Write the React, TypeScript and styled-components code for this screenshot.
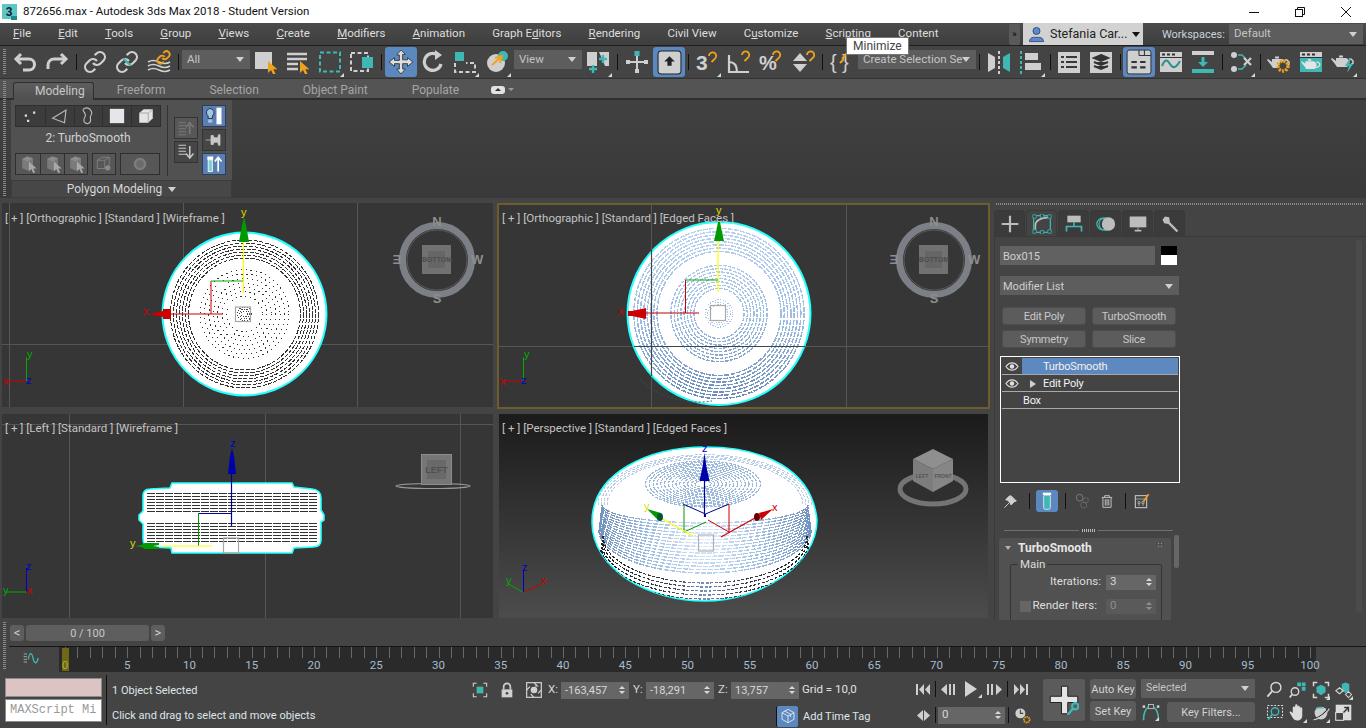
import React from 'react';
import styled, { createGlobalStyle } from 'styled-components';

const UI_FONT = 'Roboto, "Open Sans", "Liberation Sans", sans-serif';
const GRAY = '#cfcfcf';
const TEAL = '#3fb7b3';
const ORANGE = '#efa31d';

const GlobalStyle = createGlobalStyle`
  html, body {
    margin: 0;
    padding: 0;
    background: #444;
    overflow: hidden;
  }
  * {
    box-sizing: border-box;
  }
`;

const Shell = styled.div`
  position: relative;
  display: flex;
  flex-direction: column;
  width: 1366px;
  height: 728px;
  overflow: hidden;
  background: #444;
  color: #d6d6d6;
  font: 12px/1 ${UI_FONT};
`;

/* title bar */
const TitleBar = styled.div`
  display: flex;
  flex: 0 0 23px;
  align-items: center;
  padding-left: 2px;
  background: #fff;
  color: #111;
  font-size: 11.5px;
`;
const TitleText = styled.span`
  margin-left: 5px;
`;
const WindowButtons = styled.div`
  display: flex;
  margin-left: auto;
  margin-right: -3px;
`;
const WindowButton = styled.span`
  display: flex;
  align-items: center;
  justify-content: center;
  width: 46px;
  height: 20px;
`;

/* menu bar */
const MenuBar = styled.div`
  display: flex;
  flex: 0 0 23px;
  align-items: stretch;
  padding-left: 13px;
  background: linear-gradient(#4b4b4b, #3e3e3e);
  border-bottom: 1px solid #1f1f1f;
`;
const MenuItems = styled.nav`
  display: flex;
  flex: 1;
  align-items: center;
  gap: 27.2px;
  color: #dedede;
  font-size: 11.5px;
`;
const Mnemonic = styled.span`
  text-decoration: underline;
`;
const Overflow = styled.span`
  display: flex;
  align-items: center;
  justify-content: center;
  width: 11px;
  margin: 1px 3px 0 0;
  background: #5a5a5a;
  border-radius: 2px;
  color: #111;
  font-size: 9px;
  font-weight: 700;
`;
const UserBlock = styled.div`
  display: flex;
  align-items: center;
  gap: 5px;
  width: 120px;
  padding-left: 5px;
  background: #d2d2d2;
  color: #222;
  font-size: 12.5px;
`;
const WorkspaceLabel = styled.span`
  display: flex;
  align-items: center;
  width: 86px;
  padding-left: 19px;
  color: #c9d2dc;
  font-size: 11px;
`;
const SelectBox = styled.div<{ $w: number; $h?: number }>`
  display: flex;
  align-items: center;
  justify-content: space-between;
  flex: 0 0 ${(p) => p.$w}px;
  width: ${(p) => p.$w}px;
  height: ${(p) => p.$h ?? 19}px;
  padding: 0 6px 0 5px;
  background: #5d5d5d;
  color: #c4c4c4;
  font-size: 11.5px;
  white-space: nowrap;
`;
const Caret = styled.span<{ $dark?: boolean }>`
  width: 0;
  height: 0;
  border-left: 4px solid transparent;
  border-right: 4px solid transparent;
  border-top: 5px solid ${(p) => (p.$dark ? '#111' : '#d0d0d0')};
`;
const WorkspaceSelect = styled(SelectBox)`
  height: auto;
  margin: 1px 3px 1px 0;
`;

/* main toolbar */
const MainToolbar = styled.div`
  display: flex;
  flex: 0 0 33px;
  align-items: center;
  padding-left: 9px;
  background: #444;
  border-bottom: 1px solid #333;
`;
const Grip = styled.span<{ $h: number; $top: number }>`
  position: absolute;
  top: ${(p) => p.$top}px;
  left: 3px;
  width: 3px;
  height: ${(p) => p.$h}px;
  background: repeating-linear-gradient(#8a8a8a 0 1px, transparent 1px 2px);
`;
const ToolBtn = styled.span<{ $active?: boolean; $flyout?: boolean }>`
  position: relative;
  display: flex;
  flex: 0 0 32px;
  align-items: center;
  justify-content: center;
  height: 30px;
  border-radius: 3px;
  background: ${(p) => (p.$active ? '#5b88bf' : 'transparent')};
  box-shadow: ${(p) => (p.$active ? '1px 0 0 #444, -1px 0 0 #444' : 'none')};
  &::after {
    content: '';
    display: ${(p) => (p.$flyout ? 'block' : 'none')};
    position: absolute;
    right: 2px;
    bottom: 0;
    border-left: 4px solid transparent;
    border-bottom: 4px solid #d8d8d8;
  }
`;
const ToolSep = styled.span<{ $w?: number }>`
  flex: 0 0 ${(p) => p.$w ?? 6}px;
  height: 16px;
  background: linear-gradient(#111, #111) center / 1px 100% no-repeat;
`;
const ToolSelect = styled(SelectBox)<{ $ml?: number }>`
  margin: 0 0 5px ${(p) => p.$ml ?? 0}px;
`;

/* ribbon */
const RibbonTabs = styled.div`
  position: relative;
  display: flex;
  flex: 0 0 21px;
  align-items: flex-end;
  gap: 2px;
  padding-left: 13px;
  background: #545454;
  border-bottom: 2px solid #2e2e2e;
`;
const RibbonTab = styled.span<{ $active?: boolean }>`
  display: flex;
  align-items: center;
  height: ${(p) => (p.$active ? '18px' : '17px')};
  padding: ${(p) => (p.$active ? '0 8px 2px 21px' : '0 21px')};
  margin-bottom: ${(p) => (p.$active ? '-2px' : '0')};
  background: ${(p) => (p.$active ? 'linear-gradient(#5e5e5e, #4f4f4f)' : 'transparent')};
  border: ${(p) => (p.$active ? '1px solid #2e2e2e' : 'none')};
  border-bottom: none;
  border-radius: 3px 3px 0 0;
  color: ${(p) => (p.$active ? '#c8c8c8' : '#a5a5a5')};
`;
const RibbonToggle = styled.span`
  display: flex;
  align-items: center;
  gap: 3px;
  height: 17px;
  margin-left: 9px;
`;
const ToggleChip = styled.span`
  display: flex;
  align-items: center;
  justify-content: center;
  width: 14px;
  height: 8px;
  background: #e2e2e2;
  border-radius: 3px;
  &::after {
    content: '';
    border-left: 3px solid transparent;
    border-right: 3px solid transparent;
    border-bottom: 3px solid #333;
  }
`;
const SmallCaret = styled.span`
  border-left: 3px solid transparent;
  border-right: 3px solid transparent;
  border-top: 3px solid #999;
`;
const RibbonBody = styled.div`
  flex: 0 0 98px;
  padding-left: 11px;
  background: linear-gradient(#414141, #393939);
`;
const RibbonPanel = styled.section`
  display: flex;
  flex-direction: column;
  width: 221px;
  height: 98px;
  background: #515151;
`;
const PanelContent = styled.div`
  display: flex;
  flex: 1;
  padding: 5px 0 0 4px;
`;
const PanelFooter = styled.div`
  display: flex;
  flex: 0 0 18px;
  align-items: center;
  justify-content: center;
  gap: 6px;
  background: #474747;
  border: 1px solid #3c3c3c;
  color: #d6d6d6;
`;
const SubObjectColumn = styled.div`
  display: flex;
  flex-direction: column;
  width: 146px;
`;
const ButtonStrip = styled.div`
  display: flex;
  gap: 4px;
`;
const SubButtonGroup = styled.div`
  display: flex;
  border: 1px solid #2f2f2f;
  background: #3c3c3c;
  height: 22px;
`;
const SubButton = styled.span<{ $w?: number; $dim?: boolean }>`
  display: flex;
  align-items: center;
  justify-content: center;
  width: ${(p) => p.$w ?? 29}px;
  background: ${(p) => (p.$dim ? '#575757' : 'transparent')};
  & + & {
    border-left: 1px solid #2f2f2f;
  }
`;
const LevelLabel = styled.div`
  height: 26px;
  line-height: 22px;
  text-align: center;
  color: #d2d2d2;
  font-size: 12px;
`;
const PanelSep = styled.span`
  flex: 0 0 1px;
  height: 71px;
  margin: 0 6px;
  background: #333;
`;
const StackColumn = styled.div<{ $pt: number }>`
  display: flex;
  flex-direction: column;
  gap: 2px;
  width: 24px;
  padding-top: ${(p) => p.$pt}px;
  margin-right: 4px;
`;
const StackButton = styled.span<{ $on?: boolean; $dim?: boolean }>`
  display: flex;
  align-items: center;
  justify-content: center;
  height: 22px;
  border: 1px solid ${(p) => (p.$on ? '#2b3f5c' : '#333')};
  background: ${(p) => (p.$on ? '#5b7fb2' : p.$dim ? '#575757' : '#464646')};
`;

/* workspace */
const Workspace = styled.div`
  display: flex;
  flex: 0 0 422px;
`;
const ViewportGrid = styled.div`
  display: grid;
  grid-template-columns: 495px 493px;
  grid-template-rows: 208px 208px;
  column-gap: 2px;
  row-gap: 3px;
  flex: 0 0 990px;
  padding-top: 3px;
`;
const Viewport = styled.div<{ $active?: boolean; $shaded?: boolean }>`
  position: relative;
  margin-top: ${(p) => (p.$active ? '2px' : '0')};
  border: 2px solid ${(p) => (p.$active ? '#6d5c2c' : '#444')};
  background: ${(p) => (p.$shaded ? 'linear-gradient(#1b1b1b, #4c4c4c)' : '#363636')};
  overflow: hidden;
`;
const Scene = styled.svg`
  position: absolute;
  inset: 0;
  width: 100%;
  height: 100%;
`;
const ViewLabel = styled.span<{ $top: number }>`
  position: absolute;
  top: ${(p) => p.$top}px;
  left: 3px;
  color: #c4c4c4;
  font-size: 11.5px;
  white-space: nowrap;
`;

/* command panel */
const CommandPanel = styled.aside`
  position: relative;
  flex: 1;
  padding: 5px 0 0 4px;
  background: #444;
  overflow: hidden;
`;
const DotRule = styled.div`
  height: 2px;
  margin: 0 3px 5px 2px;
  background: repeating-linear-gradient(90deg, #8a8a8a 0 1px, transparent 1px 2px);
`;
const PanelTabs = styled.div`
  display: flex;
  gap: 1px;
  height: 26px;
`;
const PanelTab = styled.span<{ $active?: boolean }>`
  display: flex;
  align-items: center;
  justify-content: center;
  width: 31px;
  border-radius: 4px 4px 0 0;
  background: ${(p) => (p.$active ? '#444' : '#3b3b3b')};
  border: 1px solid #393939;
  border-bottom: none;
`;
const PanelBody = styled.div`
  position: relative;
  height: 382px;
  padding: 9px 0 0 5px;
  background: #444;
  border-top: 1px solid #393939;
  border-left: 1px solid #393939;
`;
const PanelColumn = styled.div`
  width: 180px;
`;
const NameRow = styled.div`
  display: flex;
  gap: 6px;
`;
const NameInput = styled.div`
  display: flex;
  align-items: center;
  width: 155px;
  height: 19px;
  padding: 1px 0 0 3px;
  background: #616161;
  color: #d0d0d0;
  font-size: 11px;
`;
const ColorSwatch = styled.span`
  width: 16px;
  height: 19px;
  background: linear-gradient(#000 0 9px, #fff 9px);
`;
const ModifierSelect = styled(SelectBox)`
  margin-top: 11px;
  padding: 1px 6px 0 3px;
  color: #cfcfcf;
  font-size: 11px;
`;
const ModifierGrid = styled.div`
  display: grid;
  grid-template-columns: 84px 84px;
  grid-auto-rows: 18px;
  gap: 5px 6px;
  margin: 12px 0 0 2px;
`;
const ModifierButton = styled.span`
  display: flex;
  align-items: center;
  justify-content: center;
  padding-top: 1px;
  background: #5c5c5c;
  border: 1px solid #4d4d4d;
  border-radius: 3px;
  color: #c8c8c8;
  font-size: 11px;
  letter-spacing: -0.2px;
`;
const StackList = styled.div`
  height: 127px;
  margin-top: 8px;
  padding: 1px;
  background: #444;
  border: 1px solid #fff;
`;
const StackRow = styled.div<{ $selected?: boolean }>`
  display: flex;
  align-items: center;
  height: 17px;
  padding-top: 1px;
  border-bottom: 1px solid #a8a8a8;
  background: ${(p) =>
    p.$selected ? 'linear-gradient(90deg, #444 0 20px, #5e88c0 20px)' : 'transparent'};
  color: #f2f2f2;
  font-size: 11px;
  letter-spacing: -0.2px;
`;
const EyeCell = styled.span`
  display: flex;
  align-items: center;
  justify-content: center;
  flex: 0 0 20px;
`;
const ExpandCell = styled.span`
  display: flex;
  align-items: center;
  justify-content: center;
  flex: 0 0 21px;
  &::before {
    content: '';
    border-top: 4px solid transparent;
    border-bottom: 4px solid transparent;
    border-left: 6px solid #cfcfcf;
  }
`;
const StackLabelBox = styled.span`
  padding-left: 21px;
`;
const StackPadding = styled.span`
  flex: 0 0 21px;
`;
const StackTools = styled.div`
  display: flex;
  align-items: center;
  height: 24px;
  margin-top: 6px;
`;
const StackTool = styled.span<{ $active?: boolean; $w: number }>`
  display: flex;
  align-items: center;
  justify-content: center;
  width: ${(p) => p.$w}px;
  height: 22px;
  border-radius: 3px;
  background: ${(p) => (p.$active ? '#5b88bf' : 'transparent')};
`;
const StackToolSep = styled.span<{ $ml: number; $mr: number }>`
  width: 1px;
  height: 16px;
  margin: 0 ${(p) => p.$mr}px 0 ${(p) => p.$ml}px;
  background: #111;
`;
const RollupHandle = styled.div`
  display: grid;
  grid-template-columns: 75px 13px 75px;
  gap: 3px;
  align-items: center;
  margin: 15px 0 0 4px;
  height: 5px;
`;
const HandleLine = styled.span`
  height: 1px;
  background: #707070;
`;
const HandleDots = styled.span`
  height: 3px;
  background: repeating-linear-gradient(90deg, #b8b8b8 0 1px, transparent 1px 2px);
`;
const Rollout = styled.section`
  position: relative;
  width: 172px;
  height: 90px;
  margin-top: 5px;
  margin-left: -1px;
  padding: 4px 0 0 6px;
  background: #515151;
  border-radius: 3px 3px 0 0;
`;
const RolloutTitle = styled.div`
  display: flex;
  align-items: center;
  gap: 7px;
  height: 11px;
  margin-bottom: 6px;
  color: #e6e6e6;
  font-size: 12px;
  font-weight: 700;
  &::before {
    content: '';
    border-left: 3px solid transparent;
    border-right: 3px solid transparent;
    border-top: 4px solid #b0b0b0;
  }
`;
const RolloutDots = styled.span`
  position: absolute;
  top: 4px;
  right: 8px;
  width: 6px;
  height: 6px;
  background-image: radial-gradient(#9a9a9a 0.7px, transparent 0.8px);
  background-size: 3px 3px;
`;
const GroupBox = styled.fieldset`
  width: 152px;
  height: 80px;
  margin: 0 0 0 5px;
  padding: 4px 5px 0 6px;
  border: 1px solid #353535;
  border-radius: 2px;
`;
const GroupLegend = styled.legend`
  padding: 0 2px;
  margin-left: 1px;
  color: #dcdcdc;
  font-size: 11.5px;
`;
const FieldRow = styled.div`
  display: flex;
  align-items: center;
  justify-content: flex-end;
  height: 15px;
  margin-bottom: 9px;
  color: #dedede;
  font-size: 11.5px;
`;
const Checkbox = styled.span`
  width: 11px;
  height: 11px;
  margin-right: 2px;
  background: #666;
`;
const Spin = styled.span<{ $w: number; $dim?: boolean; $h?: number; $ml?: number }>`
  display: flex;
  align-items: center;
  justify-content: space-between;
  flex: 0 0 ${(p) => p.$w}px;
  width: ${(p) => p.$w}px;
  height: ${(p) => p.$h ?? 15}px;
  margin-left: ${(p) => p.$ml ?? 0}px;
  padding: 0 4px;
  background: ${(p) => (p.$dim ? '#5a5a5a' : '#666')};
  color: ${(p) => (p.$dim ? '#8d8d8d' : '#d8d8d8')};
  font-size: 11.5px;
`;
const SpinArrows = styled.span<{ $dim?: boolean }>`
  display: flex;
  flex-direction: column;
  gap: 2px;
  &::before,
  &::after {
    content: '';
    border-left: 3px solid transparent;
    border-right: 3px solid transparent;
  }
  &::before {
    border-bottom: 3px solid ${(p) => (p.$dim ? '#909090' : '#d8d8d8')};
  }
  &::after {
    border-top: 3px solid ${(p) => (p.$dim ? '#909090' : '#d8d8d8')};
  }
`;
const RolloutScroll = styled.span`
  position: absolute;
  top: 298px;
  left: 179px;
  width: 5px;
  height: 33px;
  background: #666;
  border-radius: 2px;
`;
const MainScroll = styled.span`
  position: absolute;
  top: 3px;
  right: 4px;
  width: 6px;
  height: 373px;
  background: #4b4b4b;
  border-radius: 3px;
`;

/* time slider */
const TimeSliderRow = styled.div`
  display: flex;
  flex: 0 0 26px;
  align-items: center;
  gap: 2px;
  padding: 0 0 1px 10px;
`;
const SliderArrow = styled.span`
  display: flex;
  align-items: center;
  justify-content: center;
  width: 14px;
  height: 16px;
  background: #5e5e5e;
  border-radius: 3px;
  color: #cfcfcf;
  font-size: 13px;
`;
const SliderThumb = styled.span`
  display: flex;
  align-items: center;
  justify-content: center;
  width: 123px;
  height: 16px;
  padding-top: 1px;
  background: #5e5e5e;
  border-radius: 3px;
  color: #c8c8c8;
  font-size: 11px;
`;
const TrackBar = styled.div`
  display: flex;
  flex: 0 0 26px;
  margin-left: 9px;
  border-top: 1px solid #161616;
`;
const TrackToggle = styled.span`
  display: flex;
  align-items: center;
  justify-content: center;
  flex: 0 0 50px;
  padding: 0 6px 4px 0;
`;
const Ruler = styled.svg`
  flex: 0 0 1257px;
  background: #2a2a2a;
  overflow: visible;
`;

/* status */
const StatusBar = styled.footer`
  display: flex;
  flex: 1;
  padding: 6px 0 0 5px;
  background: #444;
`;
const ListenerColumn = styled.div`
  display: flex;
  flex-direction: column;
  gap: 2px;
  flex: 0 0 97px;
  min-width: 0;
  height: 44px;
`;
const ListenerTop = styled.div`
  height: 20px;
  background: #dcc4c4;
  border: 1px solid #8c8c8c;
`;
const ListenerBottom = styled.div`
  height: 23px;
  min-width: 0;
  padding: 4px 0 0 4px;
  background: #fff;
  border: 1px solid #8c8c8c;
  color: #999;
  font: 12px/1 "Liberation Mono", monospace;
  white-space: nowrap;
`;
const StatusSep = styled.span`
  flex: 0 0 1px;
  height: 50px;
  margin: -3px 5px 0 4px;
  background: #111;
`;
const PromptColumn = styled.div`
  display: flex;
  flex-direction: column;
  flex: 0 0 354px;
  padding-top: 8px;
  gap: 15px;
  color: #dfe5ea;
  font-size: 11px;
`;
const PromptLine = styled.span`
  height: 10px;
  line-height: 10px;
  white-space: nowrap;
`;
const CoordColumn = styled.div`
  display: flex;
  flex-direction: column;
  flex: 0 0 445px;
`;
const CoordRow = styled.div`
  display: flex;
  align-items: center;
  height: 18px;
  margin-top: 3px;
  font-size: 11.5px;
  color: #e2e2e2;
`;
const CoordIcon = styled.span`
  display: flex;
  align-items: center;
  justify-content: center;
  flex: 0 0 27px;
`;
const AxisLabel = styled.span`
  flex: 0 0 14px;
  padding-left: 1px;
  color: #d0d6dc;
`;
const CoordSpin = styled(Spin)`
  height: 17px;
  margin-right: 3px;
  font-size: 11px;
`;
const GridLabel = styled.span`
  white-space: nowrap;
`;
const TagRow = styled.div`
  display: flex;
  align-items: center;
  height: 22px;
  margin-top: 6px;
  padding-left: 310px;
  color: #dfe5ea;
  font-size: 11px;
  gap: 5px;
`;
const TagButton = styled.span`
  display: flex;
  align-items: center;
  justify-content: center;
  width: 22px;
  height: 21px;
  border-left: 1px solid #111;
  background: #5b88bf;
  border-radius: 2px;
`;
const PlaybackColumn = styled.div`
  display: flex;
  flex-direction: column;
  flex: 0 0 132px;
  gap: 6px;
  padding: 1px 0 0 2px;
`;
const PlayRow = styled.div`
  display: flex;
  align-items: center;
  height: 20px;
`;
const PlayBtn = styled.span<{ $w?: number; $flyout?: boolean }>`
  position: relative;
  display: flex;
  align-items: center;
  justify-content: center;
  flex: 0 0 ${(p) => p.$w ?? 20}px;
  height: 20px;
  &::after {
    content: '';
    display: ${(p) => (p.$flyout ? 'block' : 'none')};
    position: absolute;
    right: 2px;
    bottom: 1px;
    border-left: 4px solid transparent;
    border-bottom: 4px solid #d8d8d8;
  }
`;
const PlaySep = styled.span<{ $mx?: number }>`
  flex: 0 0 1px;
  height: 16px;
  margin: 0 ${(p) => p.$mx ?? 2}px;
  background: #111;
`;
const KeyPlus = styled.span`
  display: flex;
  align-items: center;
  justify-content: center;
  flex: 0 0 42px;
  height: 42px;
  margin-top: 1px;
  background: #5b5b5b;
  border-radius: 3px;
`;
const KeyColumn = styled.div`
  display: flex;
  flex-direction: column;
  gap: 2px;
  flex: 0 0 46px;
  margin: 1px 0 0 5px;
`;
const KeyButton = styled.span`
  display: flex;
  align-items: center;
  justify-content: center;
  height: 20px;
  background: #5b5b5b;
  border-radius: 3px;
  color: #d2d2d2;
  font-size: 11px;
  white-space: nowrap;
`;
const FilterColumn = styled.div`
  display: flex;
  flex-direction: column;
  gap: 4px;
  flex: 0 0 114px;
  margin: 1px 0 0 5px;
`;
const KeySelect = styled(SelectBox)`
  flex: none;
  font-size: 10.5px;
`;
const FilterRow = styled.div`
  display: flex;
  align-items: center;
`;
const FilterButton = styled(KeyButton)`
  flex: 1;
  margin-left: 6px;
`;
const NavGrid = styled.div`
  display: grid;
  grid-template-columns: repeat(4, 23px);
  grid-auto-rows: 23px;
  margin: 0 0 0 8px;
`;
const NavBtn = styled(PlayBtn)`
  height: 23px;
`;
const Tooltip = styled.div`
  position: absolute;
  top: 37px;
  left: 846px;
  padding: 2px 6px;
  background: #fff;
  border: 1px solid #767676;
  color: #444;
  font-size: 12px;
`;

/* icons */
const Ico = ({ s = 24, children }: { s?: number; children: React.ReactNode }) => (
  <svg width={s} height={s} viewBox="0 0 24 24" fill="none">
    {children}
  </svg>
);

const Cursor = ({ x, y, k = 1, c = ORANGE }: { x: number; y: number; k?: number; c?: string }) => (
  <path transform={`translate(${x} ${y}) scale(${k})`} d="M0 0v12l3-3 2.4 5 2.2-1-2.3-4.7H9.4z" fill={c} />
);
const Hook = ({ x, y }: { x: number; y: number }) => (
  <path
    transform={`translate(${x} ${y})`}
    d="M1 4a3.6 3.6 0 1 1 6 2.6L3.5 10"
    stroke={ORANGE}
    strokeWidth="1.8"
  />
);
const LINK_A = 'M10 13a5 5 0 0 0 7.54.54l3-3a5 5 0 0 0-7.07-7.07l-1.72 1.71';
const LINK_B = 'M14 11a5 5 0 0 0-7.54-.54l-3 3a5 5 0 0 0 7.07 7.07l1.71-1.71';
const Teapot = ({ x, y, c = GRAY, k = 1 }: { x: number; y: number; c?: string; k?: number }) => (
  <g transform={`translate(${x} ${y}) scale(${k})`}>
    <path d="M5 5h10c3 1 4 4 3 7l-2 2H6l-2-3L0 6l1-1 4 3z" fill={c} />
    <path d="M18 6h2l2 2v2l-4 3" stroke={c} strokeWidth="1.5" />
    <rect x="8" y="2.5" width="4" height="2" fill={c} />
  </g>
);
const WindowFrame = ({ children, bg = GRAY }: { children?: React.ReactNode; bg?: string }) => (
  <>
    <rect x="1" y="2" width="22" height="20" fill={bg} />
    <rect x="1" y="2" width="22" height="5" fill={GRAY} />
    <path d="M3 4.5h3M8 4.5h3M13 4.5h3" stroke="#333" strokeWidth="2" />
    {children}
  </>
);

const Eye = () => (
  <svg width="14" height="9" viewBox="0 0 14 9" fill="none">
    <path d="M1 4.5C3 1.5 5 .8 7 .8s4 .7 6 3.7c-2 3-4 3.7-6 3.7S3 7.5 1 4.5z" stroke="#e0e0e0" strokeWidth="1.2" />
    <circle cx="7" cy="4.5" r="2.2" fill="#e0e0e0" />
  </svg>
);

const CubeIcon = () => (
  <Ico s={20}>
    <path d="M5 6l6-3 7 2v11l-6 4-7-3z" fill="#7a7a7a" />
    <path d="M5 6l7 3 6-4-7-2z" fill="#8c8c8c" />
    <Cursor x={13} y={9} k={1} c="#a8a8a8" />
  </Ico>
);

const menuEntries: [string, string, string][] = [
  ['', 'F', 'ile'],
  ['', 'E', 'dit'],
  ['', 'T', 'ools'],
  ['', 'G', 'roup'],
  ['', 'V', 'iews'],
  ['', 'C', 'reate'],
  ['', 'M', 'odifiers'],
  ['', 'A', 'nimation'],
  ['Graph E', 'd', 'itors'],
  ['', 'R', 'endering'],
  ['Civil View', '', ''],
  ['C', 'u', 'stomize'],
  ['', 'S', 'cripting'],
  ['Content', '', ''],
];

const Rings = ({
  cx,
  cy,
  from,
  to,
  step,
  stroke,
  dash,
  w = 1,
  ratio = 1,
}: {
  cx: number;
  cy: number;
  from: number;
  to: number;
  step: number;
  stroke: string;
  dash: string;
  w?: number;
  ratio?: number;
}) => {
  const list: number[] = [];
  for (let r = from; r <= to; r += step) list.push(r);
  return (
    <g fill="none" stroke={stroke} strokeWidth={w} strokeDasharray={dash} shapeRendering="crispEdges">
      {list.map((r) => (
        <ellipse key={r} cx={cx} cy={cy} rx={r} ry={r * ratio} />
      ))}
    </g>
  );
};

const Compass = ({ cx, cy }: { cx: number; cy: number }) => (
  <g fontFamily="Liberation Sans, sans-serif" fontWeight="700" textAnchor="middle">
    <circle cx={cx} cy={cy} r={34.5} fill="none" stroke="#7c7f85" strokeWidth="7" />
    <circle cx={cx} cy={cy} r={30} fill="none" stroke="#5a5a5a" strokeWidth="1" />
    <rect x={cx - 15} y={cy - 15} width="29" height="29" fill="#717171" />
    <rect x={cx - 9} y={cy - 9} width="17" height="17" fill="#666" />
    <text x={cx} y={cy + 2} fontSize="7" fill="#4c4c4c">BOTTOM</text>
    <text x={cx} y={cy - 34} fontSize="13" fill="#8e8e8e">N</text>
    <text x={cx} y={cy + 43} fontSize="13" fill="#8e8e8e">S</text>
    <text transform={`translate(${cx - 40} ${cy + 4}) scale(-1 1)`} fontSize="13" fill="#8e8e8e">E</text>
    <text transform={`translate(${cx + 40} ${cy + 4}) scale(-1 1)`} fontSize="13" fill="#8e8e8e">W</text>
  </g>
);

const Tag = ({ x, y, c, children }: { x: number; y: number; c: string; children: string }) => (
  <text x={x} y={y} fill={c} fontSize="11" fontFamily="Liberation Sans, sans-serif">
    {children}
  </text>
);

const TopWireframe = () => (
  <Scene viewBox="2 203 491 204">
    <path d="M9.5 203v204M183.5 203v204M357.5 203v204M2 344.5h491" stroke="#565656" />
    <ellipse cx="244.5" cy="314" rx="82" ry="81.5" fill="#fff" stroke="#2ff" strokeWidth="2" />
    <Rings cx={244.5} cy={314} from={56} to={74} step={3} stroke="#333" dash="4 1.5" />
    <Rings cx={244.5} cy={314} from={18} to={45} step={4.4} stroke="#333" dash="1.3 3.7" />
    <Rings cx={244.5} cy={314} from={3} to={8} step={2} stroke="#444" dash="1 1.5" />
    <rect x="235.5" y="307" width="15" height="14.5" fill="none" stroke="#a8a8a8" strokeWidth="1.2" />
    <path d="M243.5 242v51" stroke="#ff0" strokeWidth="1.2" />
    <path d="M171 314h52" stroke="#c00" strokeWidth="1.2" />
    <path d="M211 314v-33" stroke="#c00" />
    <path d="M211 281h32" stroke="#0a0" />
    <path d="M149 314l14-3v-2h8v10h-8v-2z" fill="#c00" />
    <path d="M244 217l2 8 3 17h-10l3-17z" fill="#090" />
    <Tag x={241} y={216} c="#dd0">y</Tag>
    <Tag x={143} y={315} c="#c00">x</Tag>
    <path d="M26.5 381v-24" stroke="#0a0" />
    <path d="M26.5 381H6" stroke="#c00" />
    <Tag x={27} y={358} c="#0a0">y</Tag>
    <Tag x={3} y={385} c="#c00">x</Tag>
    <Tag x={26} y={384} c="#00c">z</Tag>
    <Compass cx={437} cy={260} />
  </Scene>
);

const FrontEdged = () => (
  <Scene viewBox="499 205 489 202">
    <defs>
      <linearGradient id="edgeBlue" gradientUnits="userSpaceOnUse" x1="0" x2="0" y1="222" y2="405">
        <stop offset="0" stopColor="#bcd4f4" />
        <stop offset="0.55" stopColor="#9dbce3" />
        <stop offset="1" stopColor="#6587b3" />
      </linearGradient>
    </defs>
    <path d="M651.5 205v202M846.5 205v202M499 346.5h489" stroke="#565656" />
    <ellipse cx="719" cy="313.5" rx="91.5" ry="91.5" fill="#fff" stroke="#2ff" strokeWidth="2" />
    <Rings cx={719} cy={313.5} from={62} to={87} step={3.3} stroke="url(#edgeBlue)" dash="5 1.2" w={1.5} />
    <Rings cx={719} cy={313.5} from={25} to={49} step={3.3} stroke="url(#edgeBlue)" dash="3.5 1.2" w={1.4} />
    <Rings cx={719} cy={313.5} from={9} to={14} step={2.3} stroke="#a8c4e8" dash="1.2 1.5" />
    <path d="M640 380a87 87 0 0 0 72 21" fill="none" stroke="#3d4a5c" strokeWidth="1" strokeDasharray="2 2" />
    <path d="M651.5 250v126M634 346.5h171" stroke="#444" strokeWidth="1.2" />
    <rect x="710.5" y="305.5" width="15" height="15" fill="none" stroke="#a8a8a8" strokeWidth="1.2" />
    <path d="M718 241v51" stroke="#ff0" strokeWidth="1.2" />
    <path d="M646 313h53" stroke="#c00" strokeWidth="1.2" />
    <path d="M685.5 313v-33" stroke="#c00" />
    <path d="M685.5 280H718" stroke="#0a0" />
    <path d="M628 311h4l14-3v11l-14-3h-4z" fill="#c00" />
    <path d="M718 222h2l2 10 2 9h-10l2-9z" fill="#090" />
    <Tag x={716} y={214} c="#dd0">y</Tag>
    <Tag x={618} y={315} c="#c00">x</Tag>
    <path d="M523.5 381v-24" stroke="#0a0" />
    <path d="M523.5 381H503" stroke="#c00" />
    <Tag x={524} y={358} c="#0a0">y</Tag>
    <Tag x={500} y={385} c="#c00">x</Tag>
    <Tag x={521} y={384} c="#00c">z</Tag>
    <Compass cx={934} cy={260} />
  </Scene>
);

const bandLines: number[] = [];
for (let y = 493; y <= 511; y += 3) bandLines.push(y + 0.5);
for (let y = 523; y <= 542; y += 3) bandLines.push(y + 0.5);

const LeftWireframe = () => (
  <Scene viewBox="2 414 491 204">
    <path d="M69.5 414v204M265.5 414v204M460.5 414v204M2 424.5h491" stroke="#565656" />
    <path
      d="M172 483h120l2 4 18 2q9 1 9 9v12l3 5v5l-3 2v18q0 7-8 7l-19 1-2 5H172l-1-5-21-1q-7-1-7-8v-15l-4-4v-5l4-4v-15q0-7 7-7l20-1z"
      fill="#fff"
      stroke="#2ff"
      strokeWidth="1.6"
    />
    <g stroke="#333" strokeWidth="1" strokeDasharray="8 1" shapeRendering="crispEdges">
      {bandLines.map((y) => (
        <path key={y} d={`M147 ${y}H318`} />
      ))}
    </g>
    <rect x="223.5" y="538" width="15" height="15" fill="none" stroke="#a8a8a8" strokeWidth="1.2" />
    <path d="M231.5 474v52" stroke="#009" strokeWidth="1.2" />
    <path d="M231.5 513.5h-33" stroke="#009" />
    <path d="M198.5 513.5V546" stroke="#090" />
    <path d="M162 546h50" stroke="#ff0" strokeWidth="1.2" />
    <path d="M135 546l6-1 4-2 14 0v2l-6 1 6 1v2h-14l-4-2z" fill="#090" />
    <path d="M232 448l2 8 2 18h-8l2-18z" fill="#00a" />
    <Tag x={230} y={447} c="#00c">z</Tag>
    <Tag x={130} y={547} c="#dd0">y</Tag>
    <path d="M26.5 592v-24" stroke="#00c" />
    <path d="M26.5 592H6" stroke="#0a0" />
    <Tag x={26} y={570} c="#00c">z</Tag>
    <Tag x={3} y={594} c="#0a0">y</Tag>
    <Tag x={27} y={594} c="#c00">x</Tag>
    <ellipse cx="433" cy="486" rx="37" ry="2.5" fill="none" stroke="#999" strokeWidth="1.2" />
    <rect x="421.5" y="454.5" width="30" height="30" fill="#767676" stroke="#8c8c8c" />
    <rect x="427" y="460" width="19" height="19" fill="#696969" />
    <text x="436.5" y="473" textAnchor="middle" fontSize="9" fontWeight="700" fill="#4f4f4f" fontFamily="Liberation Sans, sans-serif">
      LEFT
    </text>
  </Scene>
);

const frontBands = Array.from({ length: 16 }, (_, i) => i / 15);
const baseBands = [0, 0.25, 0.5, 0.75, 1];
const rimBands = [98, 101, 104, 107];
const TORUS =
  'M592 522C592 472 650 447 705 447C765 447 812 470 817 520C817 565 760 601 705 601C650 601 592 570 592 522Z';

const PerspectiveEdged = () => (
  <Scene viewBox="499 414 489 204">
    <defs>
      <radialGradient id="torusBlue" gradientUnits="userSpaceOnUse" cx="705" cy="540" r="105">
        <stop offset="0" stopColor="#e0ecfc" />
        <stop offset="0.5" stopColor="#a4c1e6" />
        <stop offset="1" stopColor="#7393c0" />
      </radialGradient>
      <linearGradient id="torusBase" gradientUnits="userSpaceOnUse" x1="600" x2="810" y1="0" y2="0">
        <stop offset="0" stopColor="#1e2024" />
        <stop offset="0.35" stopColor="#3a4452" />
        <stop offset="0.5" stopColor="#7a95ba" />
        <stop offset="0.65" stopColor="#3a4452" />
        <stop offset="1" stopColor="#1e2024" />
      </linearGradient>
      <clipPath id="torusSkin">
        <path d={TORUS} />
      </clipPath>
    </defs>
    <path d={TORUS} fill="#fff" stroke="#2ff" strokeWidth="1.6" />
    <g clipPath="url(#torusSkin)" fill="none" shapeRendering="crispEdges">
      <Rings cx={703} cy={484} from={8} to={60} step={3.8} stroke="#9db9dc" dash="3 1" ratio={0.4} w={1.2} />
      <g stroke="#b7cde8" strokeWidth="1" strokeDasharray="3 1.5">
        {rimBands.map((r) => (
          <path key={r} d={`M${705 - r} 505A${r} ${r * 0.47} 0 0 1 ${705 + r} 505`} />
        ))}
      </g>
      <g stroke="url(#torusBlue)" strokeWidth="1.4" strokeDasharray="5 1.2">
        {frontBands.map((t) => {
          const rx = 103 + t * 3;
          const ys = 505 + t * 25;
          return <path key={t} d={`M${705 - rx} ${ys}A${rx} ${18 + t * 25} 0 0 0 ${705 + rx} ${ys}`} />;
        })}
      </g>
      <g stroke="url(#torusBase)" strokeWidth="1.2" strokeDasharray="3 1.5">
        {baseBands.map((t) => {
          const rx = 102 + t * 2;
          const ys = 536 + t * 14;
          return <path key={t} d={`M${705 - rx} ${ys}A${rx} ${47 + t * 2} 0 0 0 ${705 + rx} ${ys}`} />;
        })}
      </g>
    </g>
    <rect x="698.5" y="535" width="15" height="16" fill="none" stroke="#b0b0b0" strokeWidth="1.2" />
    <path d="M704.5 481v36" stroke="#009" strokeWidth="1.2" />
    <path d="M683 504l22.5 10 23.5-10M705.5 514v3" stroke="#009" fill="none" />
    <path d="M684 504v28l22-10" stroke="#090" fill="none" />
    <path d="M729 504v28l-21-12" stroke="#c00" fill="none" />
    <path d="M661 518l32 18" stroke="#ff0" strokeWidth="1.2" />
    <path d="M721 537l34-19" stroke="#c00" strokeWidth="1.2" />
    <path d="M647 509l14 4-3 7z" fill="#090" />
    <ellipse cx="660" cy="517" rx="3" ry="4" fill="#053" />
    <path d="M773 509l-14 4 2 7z" fill="#c00" />
    <ellipse cx="757" cy="517" rx="3" ry="4" fill="#600" />
    <path d="M704.5 453l2 14 3 14h-10l3-14z" fill="#00a" />
    <Tag x={702} y={452} c="#00c">z</Tag>
    <Tag x={644} y={510} c="#dd0">y</Tag>
    <Tag x={772} y={511} c="#c00">x</Tag>
    <path d="M523.5 592.5V570" stroke="#00c" />
    <path d="M523.5 592.5l19-9" stroke="#c00" />
    <path d="M523.5 592.5l-16-9" stroke="#0a0" />
    <Tag x={522} y={571} c="#00c">z</Tag>
    <Tag x={506} y={584} c="#0a0">y</Tag>
    <Tag x={541} y={584} c="#c00">x</Tag>
    <ellipse cx="933" cy="489" rx="33" ry="15" fill="#2f2f2f" stroke="#747474" strokeWidth="5" />
    <path d="M913 459l20-10 20 10-20 10z" fill="#8f8f8f" />
    <path d="M913 459l20 10v23l-20-11z" fill="#7d7d7d" />
    <path d="M953 459l-20 10v23l20-11z" fill="#868686" />
    <text x="922" y="478" textAnchor="middle" fontSize="5" fontWeight="700" fill="#555" fontFamily="Liberation Sans, sans-serif">
      LEFT
    </text>
    <text x="943" y="478" textAnchor="middle" fontSize="5" fontWeight="700" fill="#555" fontFamily="Liberation Sans, sans-serif">
      FRONT
    </text>
  </Scene>
);

const frameTicks = Array.from({ length: 101 }, (_, i) => i);

const App = () => (
  <Shell>
    <GlobalStyle />
    <TitleBar>
      <svg width="16" height="18" viewBox="0 0 16 18">
        <rect x="0" y="1" width="15" height="15" fill="#5ec7c3" />
        <rect x="9" y="13" width="6" height="4" fill="#1d8a87" />
        <text x="7" y="13" textAnchor="middle" fontSize="12" fontWeight="700" fill="#123" fontFamily="Liberation Sans, sans-serif">
          3
        </text>
      </svg>
      <TitleText>872656.max - Autodesk 3ds Max 2018 - Student Version</TitleText>
      <WindowButtons>
        <WindowButton>
          <svg width="10" height="10" viewBox="0 0 10 10">
            <path d="M0 5.5h10" stroke="#111" />
          </svg>
        </WindowButton>
        <WindowButton>
          <svg width="10" height="10" viewBox="0 0 10 10" fill="none" stroke="#111">
            <path d="M2.5 2.5V.5h7v7h-2" />
            <rect x=".5" y="2.5" width="7" height="7" />
          </svg>
        </WindowButton>
        <WindowButton>
          <svg width="10" height="10" viewBox="0 0 10 10">
            <path d="M0 0l10 10M10 0L0 10" stroke="#111" />
          </svg>
        </WindowButton>
      </WindowButtons>
    </TitleBar>

    <MenuBar>
      <MenuItems>
        {menuEntries.map(([a, b, c]) => (
          <span key={a + b + c}>
            {a}
            {b && <Mnemonic>{b}</Mnemonic>}
            {c}
          </span>
        ))}
      </MenuItems>
      <Overflow>»</Overflow>
      <UserBlock>
        <Ico s={17}>
          <circle cx="12" cy="7" r="5" fill="#5b88d8" stroke="#234" />
          <path d="M2 22c1-7 6-6 10-6s9-1 10 6z" fill="#5b88d8" stroke="#234" />
        </Ico>
        <span>Stefania Car...</span>
        <Caret $dark />
      </UserBlock>
      <WorkspaceLabel>Workspaces:</WorkspaceLabel>
      <WorkspaceSelect $w={134}>
        Default
        <Caret />
      </WorkspaceSelect>
    </MenuBar>

    <MainToolbar>
      <Grip $h={26} $top={49} />
      <ToolBtn>
        <Ico>
          <path d="M8 4L3 9l5 5" stroke={GRAY} strokeWidth="3" />
          <path d="M3 9h13a5.5 5.5 0 0 1 0 11h-6" stroke={GRAY} strokeWidth="3" />
        </Ico>
      </ToolBtn>
      <ToolBtn>
        <Ico>
          <path d="M16 4l5 5-5 5" stroke={GRAY} strokeWidth="3" />
          <path d="M21 9H9a6 6 0 0 0-6 6v4" stroke={GRAY} strokeWidth="3" />
        </Ico>
      </ToolBtn>
      <ToolSep />
      <ToolBtn>
        <Ico>
          <path d={LINK_A} stroke={GRAY} strokeWidth="2.2" />
          <path d={LINK_B} stroke={GRAY} strokeWidth="2.2" />
        </Ico>
      </ToolBtn>
      <ToolBtn>
        <Ico>
          <path d={LINK_A} stroke={GRAY} strokeWidth="2.2" />
          <path d={LINK_B} stroke={GRAY} strokeWidth="2.2" />
          <path d="M8.5 8.5l7 7" stroke={TEAL} strokeWidth="2.2" />
        </Ico>
      </ToolBtn>
      <ToolBtn>
        <Ico>
          <path d="M1 12q5-3 11 0t11 0M1 16q5-3 11 0t11 0M1 20q5-3 11 0t11 0" stroke={GRAY} strokeWidth="1.6" />
          <g transform="translate(9 0) scale(.62)">
            <path d={LINK_A} stroke={ORANGE} strokeWidth="3" />
            <path d={LINK_B} stroke={ORANGE} strokeWidth="3" />
          </g>
        </Ico>
      </ToolBtn>
      <ToolSep />
      <ToolSelect $w={68} $ml={1}>
        All
        <Caret />
      </ToolSelect>
      <ToolBtn>
        <Ico>
          <rect x="1" y="2" width="17" height="17" fill={GRAY} />
          <Cursor x={14} y={11} />
        </Ico>
      </ToolBtn>
      <ToolBtn>
        <Ico>
          <path d="M1 4h20M1 9h20M1 14h11M1 19h11" stroke={GRAY} strokeWidth="2.4" />
          <Cursor x={14} y={11} />
        </Ico>
      </ToolBtn>
      <ToolBtn $flyout>
        <Ico>
          <rect x="2" y="2.5" width="20" height="19" stroke={TEAL} strokeWidth="2" strokeDasharray="4 2.5" />
        </Ico>
      </ToolBtn>
      <ToolBtn>
        <Ico>
          <rect x="1" y="3" width="17" height="18" stroke={GRAY} strokeWidth="2" strokeDasharray="4 2.5" />
          <rect x="12" y="7" width="11" height="11" fill={TEAL} />
        </Ico>
      </ToolBtn>
      <ToolSep $w={7} />
      <ToolBtn $active>
        <Ico s={26}>
          <path d="M12 1l4 4h-2.5v5H18V8l5 4-5 4v-2.5h-4.5v5H16l-4 4.5-4-4.5h2.5v-5H6V16l-5-4 5-4v2.5h4.5v-5H8z" fill="#dedede" stroke="#333" strokeWidth=".8" />
        </Ico>
      </ToolBtn>
      <ToolBtn>
        <Ico>
          <path d="M20 14a8.5 8.5 0 1 1-4-9.5" stroke={GRAY} strokeWidth="3.2" />
          <path d="M14 0l7 5-7 5z" fill={GRAY} />
        </Ico>
      </ToolBtn>
      <ToolBtn $flyout>
        <Ico>
          <rect x="2" y="2" width="9" height="9" fill={TEAL} />
          <path d="M2 13v9h20v-9h-9" stroke={GRAY} strokeWidth="2" strokeDasharray="4 2.5" />
        </Ico>
      </ToolBtn>
      <ToolBtn $flyout>
        <Ico>
          <circle cx="11" cy="13" r="9" fill={GRAY} />
          <circle cx="18" cy="6" r="5" fill={TEAL} />
          <path d="M7 15l9-8M10 8l7-2-2 7" stroke={ORANGE} strokeWidth="2" />
        </Ico>
      </ToolBtn>
      <ToolSelect $w={68} $ml={1}>
        View
        <Caret />
      </ToolSelect>
      <ToolBtn $flyout>
        <Ico>
          <path d="M1 2h10v14H1zM13 2h10v14h-4z" fill={GRAY} />
          <path d="M7 15v8M3 19h8M17 5v8M13 9h8" stroke={TEAL} strokeWidth="2.4" />
        </Ico>
      </ToolBtn>
      <ToolSep $w={7} />
      <ToolBtn>
        <Ico>
          <path d="M12 5v16M1 12h22" stroke={GRAY} strokeWidth="2" />
          <rect x="9.5" y="1" width="5" height="5" fill={TEAL} />
          <rect x="1" y="10" width="4" height="4" fill={GRAY} />
          <rect x="19" y="10" width="4" height="4" fill={GRAY} />
          <rect x="10" y="19" width="4" height="4" fill={GRAY} />
        </Ico>
      </ToolBtn>
      <ToolBtn $active>
        <Ico s={25}>
          <rect x="1" y="1" width="22" height="22" rx="3" fill={GRAY} stroke="#222" strokeWidth="1" />
          <path d="M12 6l5 5h-3v4h-4v-4H7z" fill="#222" />
        </Ico>
      </ToolBtn>
      <ToolSep />
      <ToolBtn $flyout>
        <Ico>
          <text x="1" y="20" fontSize="21" fontWeight="700" fill={GRAY} fontFamily="Liberation Sans, sans-serif">3</text>
          <Hook x={13} y={2} />
        </Ico>
      </ToolBtn>
      <ToolBtn>
        <Ico>
          <path d="M2 5v17h20M2 12q8 0 8 10" stroke={GRAY} strokeWidth="2.2" />
          <Hook x={14} y={1} />
        </Ico>
      </ToolBtn>
      <ToolBtn>
        <Ico>
          <text x="0" y="20" fontSize="20" fontWeight="700" fill={GRAY} fontFamily="Liberation Sans, sans-serif">%</text>
          <Hook x={13} y={1} />
        </Ico>
      </ToolBtn>
      <ToolBtn>
        <Ico>
          <path d="M2 11l7-8 7 8zM2 14h14l-7 8z" fill={GRAY} />
          <Hook x={15} y={1} />
        </Ico>
      </ToolBtn>
      <ToolSep />
      <ToolBtn>
        <Ico>
          <text x="1" y="19" fontSize="20" fill={GRAY} fontFamily="Liberation Sans, sans-serif">{'{'}</text>
          <text x="13" y="19" fontSize="20" fill={GRAY} fontFamily="Liberation Sans, sans-serif">{'}'}</text>
          <path d="M13 9l5-6M11 13l4-4" stroke={ORANGE} strokeWidth="2" />
        </Ico>
      </ToolBtn>
      <ToolSelect $w={118} $ml={1}>
        Create Selection Se
        <Caret />
      </ToolSelect>
      <ToolSep $w={7} />
      <ToolBtn>
        <Ico>
          <path d="M1 3l7 4v11l-7 4z" fill={GRAY} />
          <path d="M23 3l-7 4v11l7 4z" fill={TEAL} />
          <path d="M12 1v23" stroke={GRAY} strokeWidth="2" strokeDasharray="3 2" />
        </Ico>
      </ToolBtn>
      <ToolBtn $flyout>
        <Ico>
          <path d="M2 1v23" stroke={TEAL} strokeWidth="2" strokeDasharray="3 2" />
          <rect x="6" y="3" width="13" height="7" fill={GRAY} />
          <rect x="6" y="13" width="16" height="7" fill={GRAY} />
        </Ico>
      </ToolBtn>
      <ToolSep />
      <ToolBtn>
        <Ico>
          <rect x="1" y="2" width="22" height="21" fill={GRAY} />
          <path d="M4 7h3M9 7h11M4 12h3M9 12h11M4 17h3M9 17h11" stroke="#3a3a3a" strokeWidth="2.2" />
        </Ico>
      </ToolBtn>
      <ToolBtn>
        <Ico>
          <rect x="1" y="2" width="22" height="21" fill={GRAY} />
          <path d="M12 5l7 3-7 3-7-3zM5 12l7 3 7-3M5 16l7 3 7-3" stroke="#333" strokeWidth="2" fill="#333" />
        </Ico>
      </ToolBtn>
      <ToolSep />
      <ToolBtn $active>
        <Ico s={26}>
          <rect x="1" y="1" width="22" height="22" rx="2" fill={GRAY} stroke="#222" strokeWidth=".8" />
          <path d="M12 1v5M17 1v5M12 6h11" stroke="#333" />
          <path d="M5 12h5M13 12h5M5 17h5M13 17h5" stroke="#333" strokeWidth="2" />
        </Ico>
      </ToolBtn>
      <ToolBtn>
        <Ico>
          <WindowFrame>
            <rect x="1" y="7" width="22" height="1" fill="#333" />
            <path d="M3 16c3-7 5-7 8-2s6 4 10-3" stroke="#2c8f8c" strokeWidth="2" />
          </WindowFrame>
        </Ico>
      </ToolBtn>
      <ToolBtn>
        <Ico>
          <rect x="1" y="1" width="22" height="4" fill={GRAY} />
          <rect x="1" y="19" width="22" height="4" fill={TEAL} />
          <path d="M12 7v8" stroke={TEAL} strokeWidth="3" />
          <path d="M7 12h10l-5 5z" fill={TEAL} />
        </Ico>
      </ToolBtn>
      <ToolSep />
      <ToolBtn $flyout>
        <Ico>
          <circle cx="5" cy="5" r="3" fill={GRAY} />
          <circle cx="5" cy="19" r="3" fill={GRAY} />
          <path d="M9 5h4l4 4M9 19h4l4-4" stroke={TEAL} strokeWidth="1.5" />
          <path d="M15 8l7 7M22 8l-7 7" stroke={GRAY} strokeWidth="2.2" />
        </Ico>
      </ToolBtn>
      <ToolSep />
      <ToolBtn>
        <Ico>
          <Teapot x={0} y={4} />
          <circle cx="16" cy="16" r="4.5" stroke={ORANGE} strokeWidth="2.5" strokeDasharray="2 1" fill="#444" />
          <circle cx="16" cy="16" r="6" stroke={ORANGE} strokeWidth="1.5" strokeDasharray="2 2" />
        </Ico>
      </ToolBtn>
      <ToolBtn>
        <Ico>
          <WindowFrame bg={TEAL}>
            <rect x="1" y="7" width="22" height="1" fill="#333" />
            <Teapot x={2} y={7} c="#e4e4e4" k={0.85} />
          </WindowFrame>
        </Ico>
      </ToolBtn>
      <ToolBtn $flyout>
        <Ico>
          <Teapot x={0} y={3} />
          <path d="M19 8l-5 8h4l-2 7 6-9h-4l2-6z" fill={TEAL} />
        </Ico>
      </ToolBtn>
    </MainToolbar>

    <RibbonTabs>
      <Grip $h={116} $top={2} />
      <RibbonTab $active>Modeling</RibbonTab>
      <RibbonTab>Freeform</RibbonTab>
      <RibbonTab>Selection</RibbonTab>
      <RibbonTab>Object Paint</RibbonTab>
      <RibbonTab>Populate</RibbonTab>
      <RibbonToggle>
        <ToggleChip />
        <SmallCaret />
      </RibbonToggle>
    </RibbonTabs>
    <RibbonBody>
      <RibbonPanel>
        <PanelContent>
          <SubObjectColumn>
            <SubButtonGroup>
              <SubButton>
                <Ico s={18}>
                  <rect x="5" y="10" width="3" height="3" fill="#ddd" />
                  <rect x="16" y="6" width="3" height="3" fill="#ddd" />
                  <rect x="8" y="17" width="3" height="3" fill="#ddd" />
                </Ico>
              </SubButton>
              <SubButton>
                <Ico s={18}>
                  <path d="M2 15L20 4l-2 17z" stroke="#bbb" strokeWidth="1.5" />
                </Ico>
              </SubButton>
              <SubButton>
                <Ico s={18}>
                  <path d="M7 2c7-3 12 5 9 9s3 9-4 11c-5 1-7-4-4-9S2 5 7 2z" stroke="#bbb" strokeWidth="1.5" />
                </Ico>
              </SubButton>
              <SubButton>
                <Ico s={18}>
                  <rect x="3" y="3" width="18" height="18" fill="#e6e6ea" stroke="#fff" />
                </Ico>
              </SubButton>
              <SubButton>
                <Ico s={18}>
                  <path d="M3 8l6-5h12v12l-6 6H3z" fill="#e4e4e4" />
                  <path d="M3 8h12v13M15 8l6-5" stroke="#9a9a9a" />
                </Ico>
              </SubButton>
            </SubButtonGroup>
            <LevelLabel>2: TurboSmooth</LevelLabel>
            <ButtonStrip>
              <SubButtonGroup>
                <SubButton $w={24} $dim>
                  <CubeIcon />
                </SubButton>
                <SubButton $w={24} $dim>
                  <CubeIcon />
                </SubButton>
                <SubButton $w={23} $dim>
                  <CubeIcon />
                </SubButton>
              </SubButtonGroup>
              <SubButtonGroup>
                <SubButton $w={22} $dim>
                  <Ico s={18}>
                    <path d="M3 7l6-4h10v10l-6 5H3zM3 7h10v11M13 7l6-4" stroke="#8a8a8a" />
                    <circle cx="17" cy="17" r="3.5" fill="#8a8a8a" />
                  </Ico>
                </SubButton>
              </SubButtonGroup>
              <SubButtonGroup>
                <SubButton $w={38} $dim>
                  <svg width="14" height="14">
                    <circle cx="7" cy="7" r="5" fill="#6a6a6a" stroke="#7c7c7c" strokeWidth="2.5" />
                  </svg>
                </SubButton>
              </SubButtonGroup>
            </ButtonStrip>
          </SubObjectColumn>
          <PanelSep />
          <StackColumn $pt={12}>
            <StackButton $dim>
              <Ico s={18}>
                <path d="M2 5h10M2 9h10M2 13h10M2 17h10M2 21h10" stroke="#7a7a7a" strokeWidth="1.5" />
                <path d="M17 20V8M12 11l5-6 5 6" stroke="#7a7a7a" strokeWidth="2" />
              </Ico>
            </StackButton>
            <StackButton>
              <Ico s={18}>
                <path d="M2 3h10M2 7h10M2 11h10M2 15h10" stroke="#c8c8c8" strokeWidth="1.5" />
                <path d="M17 4v14M12 14l5 6 5-6" stroke="#c8c8c8" strokeWidth="2" />
              </Ico>
            </StackButton>
          </StackColumn>
          <StackColumn $pt={0}>
            <StackButton $on>
              <Ico s={20}>
                <path d="M7 3a5 5 0 0 1 3 9v3H5v-3a5 5 0 0 1 2-9z" fill="#9fc6e2" stroke="#223" />
                <rect x="5" y="16" width="5" height="4" fill="#9fc6e2" />
                <rect x="15" y="2" width="6" height="20" fill="#fff" />
              </Ico>
            </StackButton>
            <StackButton>
              <Ico s={18}>
                <path d="M1 12h7M8 6h3l1 3h5l1-4h2v14h-2l-1-4h-5l-1 3H8z" fill="#c8c8c8" stroke="#c8c8c8" />
              </Ico>
            </StackButton>
            <StackButton $on>
              <Ico s={20}>
                <rect x="4" y="3" width="7" height="4" fill="#fff" />
                <rect x="5" y="7" width="5" height="14" fill="#7fd0d0" stroke="#fff" />
                <path d="M17 21V5M13 9l4-5 4 5" stroke="#fff" strokeWidth="2" />
              </Ico>
            </StackButton>
          </StackColumn>
        </PanelContent>
        <PanelFooter>
          Polygon Modeling
          <Caret />
        </PanelFooter>
      </RibbonPanel>
    </RibbonBody>

    <Workspace>
      <ViewportGrid>
        <Viewport>
          <TopWireframe />
          <ViewLabel $top={10}>[ + ] [Orthographic ] [Standard ] [Wireframe ]</ViewLabel>
        </Viewport>
        <Viewport $active>
          <FrontEdged />
          <ViewLabel $top={8}>[ + ] [Orthographic ] [Standard ] [Edged Faces ]</ViewLabel>
        </Viewport>
        <Viewport>
          <LeftWireframe />
          <ViewLabel $top={9}>[ + ] [Left ] [Standard ] [Wireframe ]</ViewLabel>
        </Viewport>
        <Viewport $shaded>
          <PerspectiveEdged />
          <ViewLabel $top={9}>[ + ] [Perspective ] [Standard ] [Edged Faces ]</ViewLabel>
        </Viewport>
      </ViewportGrid>

      <CommandPanel>
        <DotRule />
        <PanelTabs>
          <PanelTab>
            <Ico s={20}>
              <path d="M12 2v20M2 12h20" stroke="#bdbdbd" strokeWidth="2.6" />
            </Ico>
          </PanelTab>
          <PanelTab $active>
            <Ico s={20}>
              <path d="M4 20V14Q4 5 20 4" stroke="#bdbdbd" strokeWidth="2" />
              <rect x="2" y="2" width="20" height="20" stroke={TEAL} strokeWidth="1.5" />
              <path d="M1 1h4v4H1zM10 0h4v4h-4zM19 1h4v4h-4zM1 19h4v4H1zM10 20h4v4h-4zM19 19h4v4h-4z" fill="#3a3a3a" stroke={TEAL} />
            </Ico>
          </PanelTab>
          <PanelTab>
            <Ico s={20}>
              <rect x="4" y="2" width="16" height="8" fill="#bdbdbd" />
              <path d="M12 10v4M3 21v-6h18v6" stroke={TEAL} strokeWidth="2" />
            </Ico>
          </PanelTab>
          <PanelTab>
            <Ico s={20}>
              <circle cx="8" cy="12" r="7" stroke={TEAL} strokeWidth="1.5" />
              <circle cx="11" cy="12" r="7.5" stroke={TEAL} strokeWidth="1.5" />
              <circle cx="15" cy="12" r="8" fill="#bdbdbd" />
            </Ico>
          </PanelTab>
          <PanelTab>
            <Ico s={20}>
              <rect x="2" y="3" width="20" height="13" fill="#bdbdbd" />
              <path d="M8 20h8" stroke="#bdbdbd" strokeWidth="2" />
              <path d="M12 16v4" stroke="#bdbdbd" />
            </Ico>
          </PanelTab>
          <PanelTab>
            <Ico s={20}>
              <path d="M3 7l3-4 5 1 1 6 10 10-2 2-10-10-5-1z" fill="#bdbdbd" />
            </Ico>
          </PanelTab>
        </PanelTabs>
        <PanelBody>
          <PanelColumn>
            <NameRow>
              <NameInput>Box015</NameInput>
              <ColorSwatch />
            </NameRow>
            <ModifierSelect $w={179}>
              Modifier List
              <Caret />
            </ModifierSelect>
            <ModifierGrid>
              <ModifierButton>Edit Poly</ModifierButton>
              <ModifierButton>TurboSmooth</ModifierButton>
              <ModifierButton>Symmetry</ModifierButton>
              <ModifierButton>Slice</ModifierButton>
            </ModifierGrid>
            <StackList>
              <StackRow $selected>
                <EyeCell>
                  <Eye />
                </EyeCell>
                <StackPadding />
                TurboSmooth
              </StackRow>
              <StackRow>
                <EyeCell>
                  <Eye />
                </EyeCell>
                <ExpandCell />
                Edit Poly
              </StackRow>
              <StackRow>
                <StackLabelBox>Box</StackLabelBox>
              </StackRow>
            </StackList>
            <StackTools>
              <StackTool $w={22}>
                <Ico s={16}>
                  <path d="M2 22l8-8M12 4l8 8-3 1-5 5-1-3-4-4-3-1 5-5z" stroke="#cfcfcf" strokeWidth="1.5" fill="#cfcfcf" />
                </Ico>
              </StackTool>
              <StackToolSep $ml={7} $mr={6} />
              <StackTool $w={22} $active>
                <Ico s={20}>
                  <rect x="7" y="2" width="10" height="3" fill="#fff" />
                  <rect x="8" y="5" width="8" height="17" rx="2" fill={TEAL} stroke="#eee" />
                </Ico>
              </StackTool>
              <StackToolSep $ml={7} $mr={0} />
              <StackTool $w={34}>
                <Ico s={16}>
                  <circle cx="7" cy="7" r="5" stroke="#7a7a7a" strokeWidth="1.5" />
                  <circle cx="16" cy="11" r="4" stroke="#666" strokeWidth="1.5" />
                  <circle cx="13" cy="18" r="4.5" stroke="#666" strokeWidth="1.5" />
                </Ico>
              </StackTool>
              <StackTool $w={14}>
                <Ico s={15}>
                  <path d="M3 5h18M8 5V2h8v3M5 5v17h14V5M9 8v11M12 8v11M15 8v11" stroke="#c8c8c8" strokeWidth="1.6" />
                </Ico>
              </StackTool>
              <StackToolSep $ml={11} $mr={6} />
              <StackTool $w={20}>
                <Ico s={16}>
                  <rect x="2" y="4" width="17" height="18" stroke="#c8c8c8" strokeWidth="1.6" />
                  <path d="M2 9h17M6 13h3v3H6zM12 13h3v3h-3zM6 18h3M12 18h3" stroke="#c8c8c8" />
                  <path d="M14 13l8-11" stroke={ORANGE} strokeWidth="2.5" />
                </Ico>
              </StackTool>
            </StackTools>
            <RollupHandle>
              <HandleLine />
              <HandleDots />
              <HandleLine />
            </RollupHandle>
            <Rollout>
              <RolloutDots />
              <RolloutTitle>TurboSmooth</RolloutTitle>
              <GroupBox>
                <GroupLegend>Main</GroupLegend>
                <FieldRow>
                  Iterations:
                  <Spin $w={50} $ml={5}>
                    3
                    <SpinArrows />
                  </Spin>
                </FieldRow>
                <FieldRow>
                  <Checkbox />
                  Render Iters:
                  <Spin $w={50} $ml={9} $dim>
                    0
                    <SpinArrows $dim />
                  </Spin>
                </FieldRow>
              </GroupBox>
            </Rollout>
          </PanelColumn>
          <RolloutScroll />
          <MainScroll />
        </PanelBody>
      </CommandPanel>
    </Workspace>

    <TimeSliderRow>
      <Grip $h={48} $top={622} />
      <SliderArrow>&lt;</SliderArrow>
      <SliderThumb>0 / 100</SliderThumb>
      <SliderArrow>&gt;</SliderArrow>
    </TimeSliderRow>
    <TrackBar>
      <TrackToggle>
        <Ico s={16}>
          <path d="M1 6h5M1 10h5M1 14h5M1 18h5" stroke="#bdbdbd" strokeWidth="1.2" />
          <path d="M8 14c2-11 5-11 7-2s5 10 8 0" stroke={TEAL} strokeWidth="2" />
        </Ico>
      </TrackToggle>
      <Ruler width="1257" height="25" viewBox="59 647 1257 25">
        {frameTicks.map((f) => (
          <path key={f} d={`M${Math.round(65 + f * 12.45) + 0.5} 647v11`} stroke="#696969" />
        ))}
        <rect x="62" y="648" width="7" height="23" fill="#6f6815" />
        {frameTicks
          .filter((f) => f % 5 === 0)
          .map((f) => (
            <text
              key={f}
              x={65 + f * 12.45}
              y="669"
              textAnchor="middle"
              fontSize="11.5"
              fill={f === 0 ? '#b2a93c' : '#a6bccd'}
              fontFamily="Roboto, sans-serif"
            >
              {f}
            </text>
          ))}
      </Ruler>
    </TrackBar>

    <StatusBar>
      <ListenerColumn>
        <ListenerTop />
        <ListenerBottom>MAXScript Mi</ListenerBottom>
      </ListenerColumn>
      <StatusSep />
      <PromptColumn>
        <PromptLine>1 Object Selected</PromptLine>
        <PromptLine>Click and drag to select and move objects</PromptLine>
      </PromptColumn>
      <CoordColumn>
        <CoordRow>
          <CoordIcon>
            <Ico s={16}>
              <path d="M2 7V2h5M17 2h5v5M22 17v5h-5M7 22H2v-5" stroke="#d0d0d0" strokeWidth="1.6" />
              <rect x="7" y="7" width="10" height="10" fill={TEAL} />
            </Ico>
          </CoordIcon>
          <CoordIcon>
            <Ico s={16}>
              <rect x="4" y="11" width="16" height="12" fill="#d0d0d0" />
              <path d="M7 11V7a5 5 0 0 1 10 0v4" stroke="#d0d0d0" strokeWidth="2.5" />
              <circle cx="12" cy="17" r="2" fill="#444" />
            </Ico>
          </CoordIcon>
          <CoordIcon>
            <Ico s={16}>
              <rect x="1" y="1" width="22" height="22" stroke="#d0d0d0" strokeWidth="1.8" />
              <path d="M12 1l5 5h-3.5M12 23l-5-5M1 12l5-5M23 12l-5 5" stroke="#d0d0d0" strokeWidth="1.8" />
              <circle cx="12" cy="12" r="5" fill="#d0d0d0" />
            </Ico>
          </CoordIcon>
          <AxisLabel>X:</AxisLabel>
          <CoordSpin $w={68}>
            -163,457
            <SpinArrows />
          </CoordSpin>
          <AxisLabel>Y:</AxisLabel>
          <CoordSpin $w={68}>
            -18,291
            <SpinArrows />
          </CoordSpin>
          <AxisLabel>Z:</AxisLabel>
          <CoordSpin $w={68}>
            13,757
            <SpinArrows />
          </CoordSpin>
          <GridLabel>Grid = 10,0</GridLabel>
        </CoordRow>
        <TagRow>
          <TagButton>
            <Ico s={16}>
              <path d="M12 2l9 5v10l-9 5-9-5V7zM3 7l9 5 9-5M12 12v10M7 4.5l9 5v4" stroke="#eee" strokeWidth="1.3" />
            </Ico>
          </TagButton>
          Add Time Tag
        </TagRow>
      </CoordColumn>
      <PlaybackColumn>
        <PlayRow>
          <PlayBtn>
            <svg width="15" height="11" viewBox="0 0 15 11" fill="#cfcfcf">
              <path d="M0 0h2v11H0zM8 0v11L3 5.5zM14 0v11L9 5.5z" />
            </svg>
          </PlayBtn>
          <PlaySep />
          <PlayBtn $w={20}>
            <svg width="15" height="11" viewBox="0 0 15 11" fill="#cfcfcf">
              <path d="M6 0v11L0 5.5zM8 0h2v11H8zM12 0h2v11h-2z" />
            </svg>
          </PlayBtn>
          <PlayBtn $w={26} $flyout>
            <svg width="14" height="16" viewBox="0 0 14 16" fill="#d2d2d2">
              <path d="M1 0l12 8-12 8z" />
            </svg>
          </PlayBtn>
          <PlayBtn $w={20}>
            <svg width="15" height="11" viewBox="0 0 15 11" fill="#cfcfcf">
              <path d="M0 0h2v11H0zM4 0h2v11H4zM9 0l6 5.5L9 11z" />
            </svg>
          </PlayBtn>
          <PlaySep $mx={3} />
          <PlayBtn>
            <svg width="15" height="11" viewBox="0 0 15 11" fill="#cfcfcf">
              <path d="M0 0l5 5.5L0 11zM6 0l5 5.5L6 11zM12 0h2v11h-2z" />
            </svg>
          </PlayBtn>
        </PlayRow>
        <PlayRow>
          <PlayBtn>
            <svg width="13" height="11" viewBox="0 0 13 11" fill="#cfcfcf">
              <path d="M6 0v11L0 5.5zM7 0l6 5.5L7 11z" />
            </svg>
          </PlayBtn>
          <PlaySep />
          <Spin $w={67} $h={17}>
            0
            <SpinArrows />
          </Spin>
          <PlaySep $mx={3} />
          <PlayBtn>
            <Ico s={17}>
              <circle cx="9" cy="9" r="7" fill="#cfcfcf" />
              <path d="M9 4v5h4" stroke="#444" strokeWidth="1.5" />
              <circle cx="18" cy="18" r="4" stroke={ORANGE} strokeWidth="2.5" strokeDasharray="2 1" fill="#444" />
            </Ico>
          </PlayBtn>
        </PlayRow>
      </PlaybackColumn>
      <KeyPlus>
        <Ico s={30}>
          <path d="M10 1h5v8h8v5h-8v9h-5v-9H1V9h9z" fill="#e4e4e4" stroke="#222" strokeWidth=".8" />
          <circle cx="21" cy="17" r="2.5" stroke={TEAL} strokeWidth="1.8" fill="#5b5b5b" />
          <path d="M19 19l-4 5M16 23l-1-1" stroke={TEAL} strokeWidth="1.8" />
        </Ico>
      </KeyPlus>
      <KeyColumn>
        <KeyButton>Auto Key</KeyButton>
        <KeyButton>Set Key</KeyButton>
      </KeyColumn>
      <FilterColumn>
        <KeySelect $w={114}>
          Selected
          <Caret />
        </KeySelect>
        <FilterRow>
          <PlayBtn $w={20} $flyout>
            <Ico s={20}>
              <rect x="9" y="3" width="6" height="5" stroke="#d0d0d0" />
              <path d="M3 22c0-8 1-13 6-16M21 22c0-8-1-13-6-16" stroke={TEAL} strokeWidth="2" />
              <rect x="2" y="4" width="3" height="3" fill="#d0d0d0" />
              <rect x="19" y="4" width="3" height="3" fill="#d0d0d0" />
            </Ico>
          </PlayBtn>
          <FilterButton>Key Filters...</FilterButton>
        </FilterRow>
      </FilterColumn>
      <NavGrid>
        <NavBtn>
          <Ico s={17}>
            <circle cx="14" cy="9" r="7" stroke="#d8d8d8" strokeWidth="2" />
            <path d="M9 14L2 22" stroke="#d8d8d8" strokeWidth="2.6" />
          </Ico>
        </NavBtn>
        <NavBtn>
          <Ico s={18}>
            <circle cx="8" cy="14" r="5" stroke="#d8d8d8" strokeWidth="1.8" />
            <path d="M4 18l-3 4" stroke="#d8d8d8" strokeWidth="2.2" />
            <path d="M11 2h5v5h-5zM17 2h5v5h-5zM17 8h5v5h-5z" fill={TEAL} />
          </Ico>
        </NavBtn>
        <NavBtn $flyout>
          <Ico s={18}>
            <path d="M2 7V2h5M17 2h5v5M22 17v5h-5M7 22H2v-5" stroke="#d8d8d8" strokeWidth="2" />
            <path d="M12 5l6 3v7l-6 4-6-4V8z" fill={TEAL} />
          </Ico>
        </NavBtn>
        <NavBtn $flyout>
          <Ico s={18}>
            <path d="M14 2l5 2v9l-5 3-5-3V4z" fill={TEAL} />
            <path d="M6 9l5 4-5 4-5-4zM18 14l4 4-4 4-4-4z" stroke="#d8d8d8" strokeWidth="1.4" />
          </Ico>
        </NavBtn>
        <NavBtn>
          <Ico s={18}>
            <rect x="2" y="2" width="20" height="16" stroke="#d8d8d8" strokeWidth="1.5" strokeDasharray="2.5 2" />
            <circle cx="12" cy="10" r="5" stroke={TEAL} strokeWidth="1.8" />
            <path d="M8 14l-5 7" stroke={TEAL} strokeWidth="2.2" />
          </Ico>
        </NavBtn>
        <NavBtn $flyout>
          <Ico s={19}>
            <path d="M6 13V6a1.5 1.5 0 0 1 3 0V3a1.5 1.5 0 0 1 3 0v2a1.5 1.5 0 0 1 3 0v2a1.5 1.5 0 0 1 3 0v9c0 4-3 6-6 6s-5-1-7-5l-3-5c0-2 2-2 4 1z" fill="#dcdcdc" />
          </Ico>
        </NavBtn>
        <NavBtn $flyout>
          <Ico s={18}>
            <circle cx="12" cy="12" r="8.5" fill="#cfcfcf" />
            <path d="M4 6a9 9 0 0 1 12 0" fill={TEAL} />
            <path d="M1 19C8 20 20 10 23 4" stroke="#333" strokeWidth="1.5" />
            <path d="M2 21C9 21 21 11 23 6" stroke="#cfcfcf" strokeWidth="1.5" />
          </Ico>
        </NavBtn>
        <NavBtn>
          <Ico s={17}>
            <rect x="1" y="1" width="22" height="22" fill="#dcdcdc" />
            <rect x="1" y="12" width="11" height="11" fill="#444" stroke="#dcdcdc" strokeWidth="1.5" />
            <path d="M12 12l7-7M13 5h6v6" stroke="#333" strokeWidth="2" />
          </Ico>
        </NavBtn>
      </NavGrid>
    </StatusBar>

    <Tooltip>Minimize</Tooltip>
  </Shell>
);

export default App;
